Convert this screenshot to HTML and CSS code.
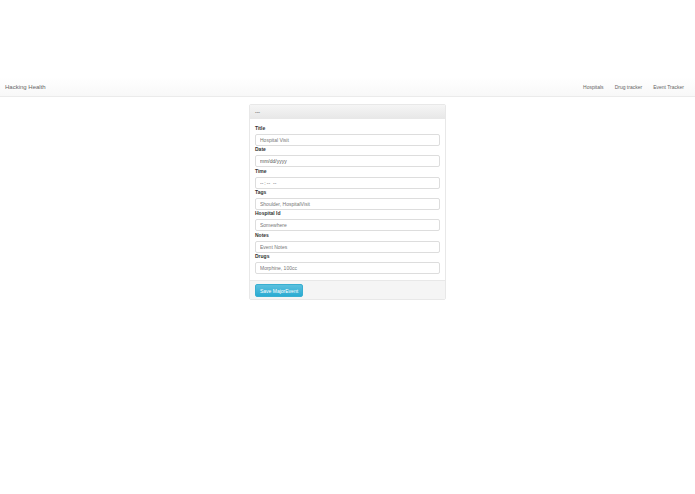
FILE: index.html
```
<!DOCTYPE html>
<html lang="en">
<head>
  <meta charset="UTF-8">
  <title>Hacking Health</title>
  <link rel="stylesheet" href="styles.css">
</head>
<body>
  <nav class="navbar">
    <a class="brand" href="#">Hacking Health</a>
    <div class="nav-links">
      <a href="#">Hospitals</a>
      <a href="#">Drug tracker</a>
      <a href="#">Event Tracker</a>
    </div>
  </nav>

  <form class="panel">
    <div class="panel-heading">---</div>

    <div class="panel-body">
      <div class="form-row">
        <label for="title">Title</label>
        <input type="text" id="title" placeholder="Hospital Visit">
      </div>
      <div class="form-row">
        <label for="date">Date</label>
        <input type="date" id="date">
      </div>
      <div class="form-row">
        <label for="time">Time</label>
        <input type="time" id="time">
      </div>
      <div class="form-row">
        <label for="tags">Tags</label>
        <input type="text" id="tags" placeholder="Shoulder, HospitalVisit">
      </div>
      <div class="form-row">
        <label for="hospital">Hospital Id</label>
        <input type="text" id="hospital" placeholder="Somewhere">
      </div>
      <div class="form-row">
        <label for="notes">Notes</label>
        <input type="text" id="notes" placeholder="Event Notes">
      </div>
      <div class="form-row">
        <label for="drugs">Drugs</label>
        <input type="text" id="drugs" placeholder="Morphine, 100cc">
      </div>
    </div>

    <div class="panel-footer">
      <button type="button" class="btn-save">Save MajorEvent</button>
    </div>
  </form>
</body>
</html>
```

FILE: styles.css
```
* {
  box-sizing: border-box;
}
body {
  margin: 0;
  padding-top: 77px;
  background: #fff;
  color: #333;
  font-family: "Liberation Sans", Arial, sans-serif;
  font-size: 5px;
  line-height: 8px;
}
.navbar {
  display: flex;
  justify-content: space-between;
  align-items: center;
  height: 20px;
  padding: 0 11px 0 5px;
  background: linear-gradient(#fff, #f8f8f8);
  border-bottom: 1px solid #ebebeb;
}
.navbar a {
  color: #666;
  text-decoration: none;
}
.navbar .brand {
  font-size: 6px;
}
.nav-links {
  display: flex;
  gap: 11px;
}
.panel {
  max-width: 197px;
  margin: 7px auto 0;
  border: 1px solid #e8e8e8;
  border-radius: 2px;
}
.panel-heading {
  padding: 3px 5px 2px;
  background: linear-gradient(#f5f5f5, #e8e8e8);
  border-bottom: 1px solid #e8e8e8;
}
.panel-body {
  display: flex;
  flex-direction: column;
  justify-content: space-between;
  min-height: 161px;
  padding: 6px 5px;
}
label {
  display: block;
  margin-bottom: 2px;
  font-weight: bold;
  line-height: 7px;
}
input {
  display: block;
  width: 100%;
  height: 12px;
  margin: 0;
  padding: 0 4px;
  background: #fff;
  border: 1px solid #ddd;
  border-radius: 2px;
  color: #555;
  font: inherit;
}
input::placeholder {
  color: #777;
}
input::-webkit-calendar-picker-indicator {
  display: none;
}
input::-webkit-datetime-edit,
input::-webkit-datetime-edit-fields-wrapper,
input::-webkit-datetime-edit-month-field,
input::-webkit-datetime-edit-day-field,
input::-webkit-datetime-edit-year-field {
  padding: 0;
}
input::-webkit-datetime-edit-hour-field {
  padding-left: 0;
}
.panel-footer {
  padding: 3px 5px 2px;
  background: #f5f5f5;
  border-top: 1px solid #e8e8e8;
}
.btn-save {
  display: block;
  height: 13px;
  padding: 0 4px;
  background: linear-gradient(#5bc0de, #2aabd2);
  border: 1px solid #39afd1;
  border-radius: 2px;
  color: #fff;
  font: inherit;
  cursor: pointer;
}
```
